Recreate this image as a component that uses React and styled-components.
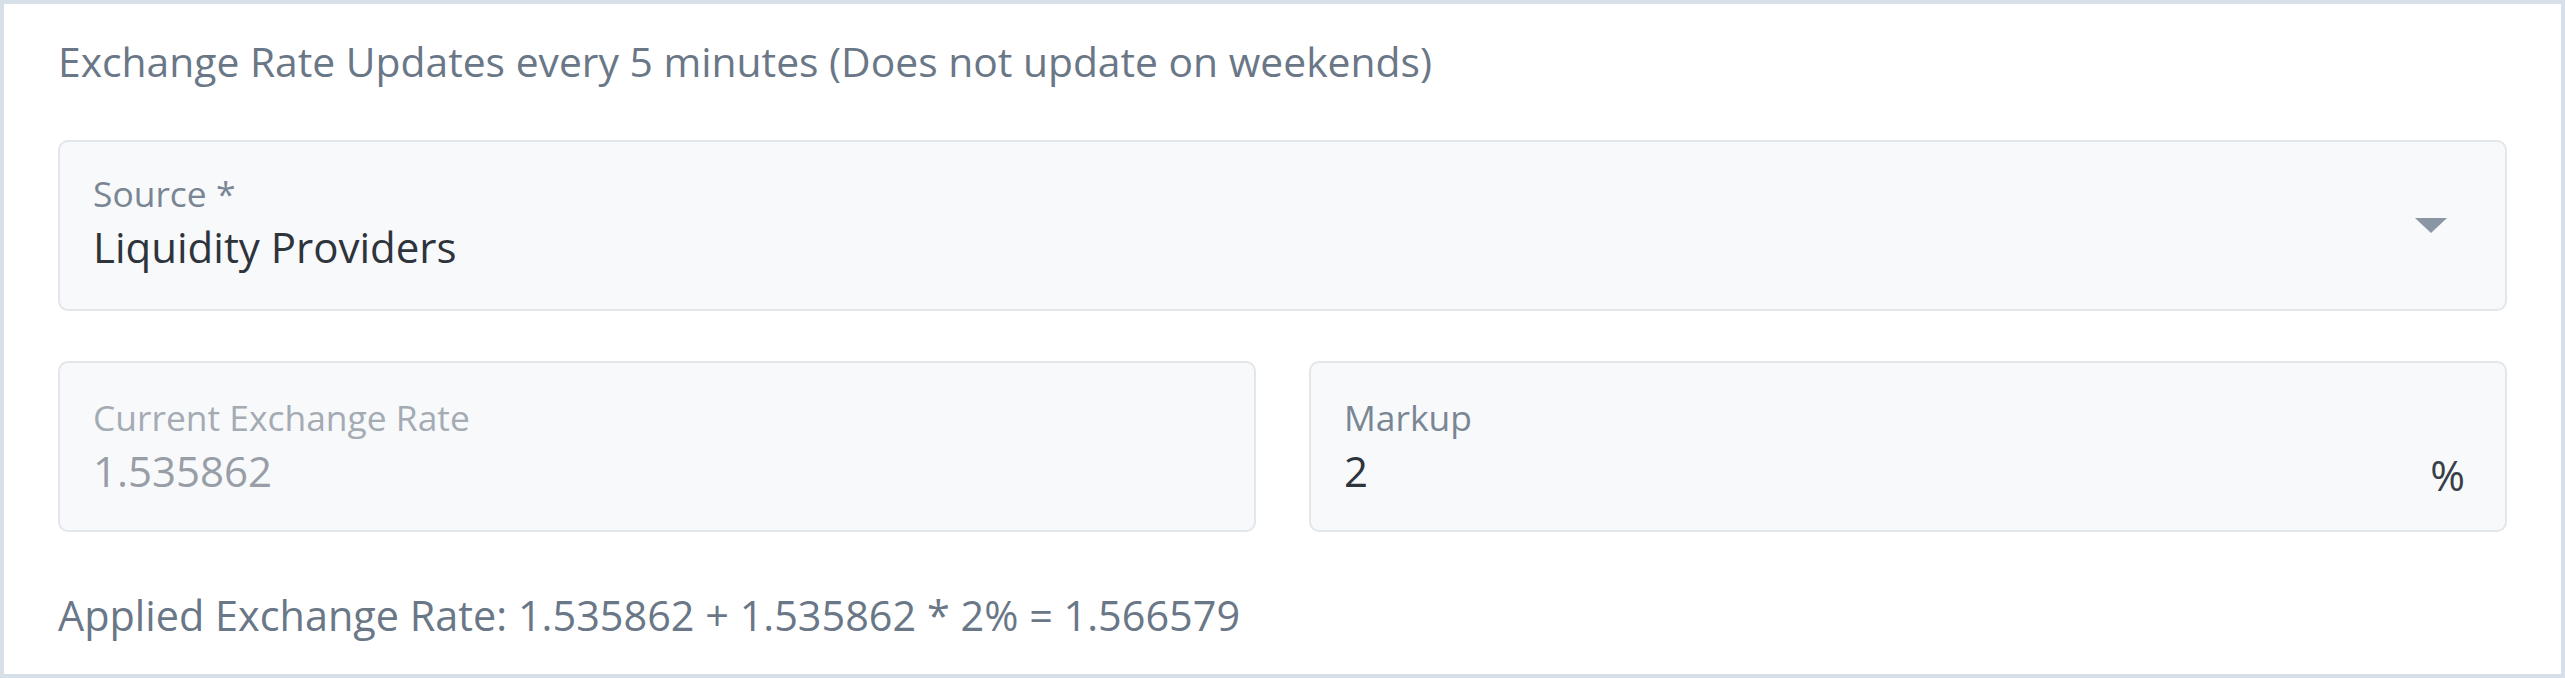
import React from 'react';
import styled, { createGlobalStyle } from 'styled-components';

const GlobalStyle = createGlobalStyle`
  html, body { margin: 0; padding: 0; background: #ffffff; }
  body { font-family: "Open Sans", "Liberation Sans", sans-serif; }
  * { box-sizing: border-box; }
`;

const Card = styled.div`
  height: 678px;
  border: 4px solid #d7dfe8;
  background: #ffffff;
  padding: 28px 54px 0;
`;

const Note = styled.p`
  margin: ${p => (p.$bottom ? '54px 0 0' : '0 0 50px')};
  font-size: ${p => (p.$bottom ? '41.4px' : '40.8px')};
  line-height: 58px;
  color: #6a7787;
  white-space: nowrap;
`;

const Field = styled.div`
  display: flex;
  align-items: center;
  height: 171px;
  padding: 0 40px 0 33px;
  background: #f8f9fb;
  border: 2px solid #e3e6ea;
  border-radius: 10px;
`;

const FieldBody = styled.div`
  flex: 1;
  display: flex;
  flex-direction: column;
  padding-bottom: ${p => (p.$low ? '0' : '6px')};
`;

const Label = styled.span`
  font-size: 35.4px;
  line-height: 44px;
  color: ${p => (p.$disabled ? '#a5abb3' : '#7a8694')};
`;

const Value = styled.span`
  margin-top: 4px;
  font-size: 42px;
  line-height: 56px;
  color: ${p => (p.$disabled ? '#989ea6' : '#2e343c')};
`;

const Suffix = styled.span`
  align-self: flex-end;
  margin-bottom: 27px;
  font-size: 42px;
  line-height: 56px;
  color: #383f48;
`;

const Caret = styled.svg`
  width: 32px;
  height: 15px;
  margin-right: 18px;
  fill: #8a96a3;
`;

const Row = styled.div`
  display: grid;
  grid-template-columns: 1fr 1fr;
  gap: 53px;
  margin-top: 50px;
`;

export default function App() {
  const rate = 1.535862;
  const markup = 2;
  const applied = (rate + (rate * markup) / 100).toFixed(6);

  return (
    <>
      <GlobalStyle />
      <Card>
        <Note>Exchange Rate Updates every 5 minutes (Does not update on weekends)</Note>

        <Field>
          <FieldBody>
            <Label>Source *</Label>
            <Value>Liquidity Providers</Value>
          </FieldBody>
          <Caret viewBox="0 0 32 15">
            <path d="M0 0h32L16 15z" />
          </Caret>
        </Field>

        <Row>
          <Field>
            <FieldBody $low>
              <Label $disabled>Current Exchange Rate</Label>
              <Value $disabled>{rate}</Value>
            </FieldBody>
          </Field>
          <Field>
            <FieldBody $low>
              <Label>Markup</Label>
              <Value>{markup}</Value>
            </FieldBody>
            <Suffix>%</Suffix>
          </Field>
        </Row>

        <Note $bottom>
          Applied Exchange Rate: {rate} + {rate} * {markup}% = {applied}
        </Note>
      </Card>
    </>
  );
}
